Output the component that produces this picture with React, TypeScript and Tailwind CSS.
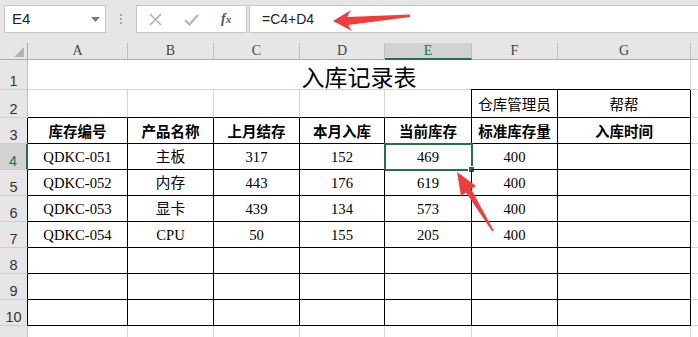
import React from 'react';

const colW = ['w-[100px]', 'w-[86px]', 'w-[86px]', 'w-[85px]', 'w-[87px]', 'w-[86px]', 'w-[133px]'];
const letters = ['A', 'B', 'C', 'D', 'E', 'F', 'G'];

const headers = ['库存编号', '产品名称', '上月结存', '本月入库', '当前库存', '标准库存量', '入库时间'];
const data = [
  ['QDKC-051', '主板', '317', '152', '469', '400', ''],
  ['QDKC-052', '内存', '443', '176', '619', '400', ''],
  ['QDKC-053', '显卡', '439', '134', '573', '400', ''],
  ['QDKC-054', 'CPU', '50', '155', '205', '400', ''],
  ['', '', '', '', '', '', ''],
  ['', '', '', '', '', '', ''],
  ['', '', '', '', '', '', ''],
];

const cellFont = "font-['Liberation_Serif','Noto_Sans_CJK_SC',serif]";

const RowHead: React.FC<{ n: number; h: string; active?: boolean; dark?: boolean }> = ({ n, h, active, dark }) => (
  <div
    className={`w-[28px] shrink-0 ${h} border-b border-[#cfcfcf] flex items-end justify-center pb-[1px] text-[14.5px] leading-none font-['Liberation_Sans',sans-serif] ${
      active
        ? 'bg-[#d2d2d2] text-[#217346] border-r-2 border-r-[#217346]'
        : dark
        ? 'bg-[#e6e6e6] text-[#333] border-r border-r-black'
        : 'bg-[#e6e6e6] text-[#333] border-r border-r-[#bdbdbd]'
    }`}
  >
    {n}
  </div>
);

export default function App() {
  return (
    <div className="relative w-[698px] h-[337px] overflow-hidden bg-white font-['Noto_Sans_CJK_SC',sans-serif]">
      {/* Formula bar */}
      <div className="h-[43px] bg-[#e6e6e6] flex items-start pt-[5px] pl-[4px]">
        <div className="w-[102px] h-[28px] shrink-0 bg-white border border-[#c6c6c6] flex items-center justify-between pl-[7px] pr-[5px]">
          <span className="text-[15px] text-[#222] font-['Liberation_Sans',sans-serif]">E4</span>
          <svg width="9" height="5" viewBox="0 0 9 5">
            <path d="M0 0 H9 L4.5 5 Z" fill="#7a7a7a" />
          </svg>
        </div>
        <div className="w-[30px] h-[28px] shrink-0 flex flex-col items-center justify-center gap-[2px]">
          <span className="w-[2px] h-[2px] bg-[#a6a6a6]" />
          <span className="w-[2px] h-[2px] bg-[#a6a6a6]" />
          <span className="w-[2px] h-[2px] bg-[#a6a6a6]" />
        </div>
        <div className="w-[111px] h-[28px] shrink-0 bg-white border border-[#c6c6c6] flex items-center pl-[12px]">
          <svg width="13" height="13" viewBox="0 0 13 13">
            <path d="M1 1 L12 12 M12 1 L1 12" stroke="#b3b3b3" strokeWidth="1.6" />
          </svg>
          <svg width="15" height="13" viewBox="0 0 15 13" className="ml-[22px]">
            <path d="M1 7 L5.5 11.5 L14 2" stroke="#b3b3b3" strokeWidth="2" fill="none" />
          </svg>
          <span className="ml-[22px] text-[14px] italic font-bold text-[#555] font-['Liberation_Serif',serif] leading-none">
            f<span className="text-[11px]">x</span>
          </span>
        </div>
        <div className="flex-1 h-[28px] ml-[2px] bg-white border border-[#c6c6c6] border-r-0 flex items-center pl-[12px] text-[14px] text-[#222] font-['Liberation_Sans',sans-serif]">
          =C4+D4
        </div>
      </div>

      {/* Column headers */}
      <div className="flex h-[17px]">
        <div className="w-[28px] shrink-0 bg-[#e6e6e6] border-r border-b border-[#ababab] flex items-end justify-end pr-[3px] pb-[2px]">
          <svg width="10" height="10" viewBox="0 0 10 10">
            <path d="M10 0 V10 H0 Z" fill="#b5b5b5" />
          </svg>
        </div>
        {letters.map((l, i) =>
          l === 'E' ? (
            <div
              key={l}
              className={`${colW[i]} shrink-0 bg-[#d2d2d2] border-r border-[#bfbfbf] border-b-2 border-b-[#217346] flex items-center justify-center text-[14px] leading-none text-[#217346] font-['Liberation_Serif',serif]`}
            >
              {l}
            </div>
          ) : (
            <div
              key={l}
              className={`${colW[i]} shrink-0 bg-[#e6e6e6] border-r border-[#bfbfbf] border-b border-b-[#ababab] flex items-center justify-center text-[14px] leading-none text-[#444] font-['Liberation_Serif',serif]`}
            >
              {l}
            </div>
          )
        )}
        <div className="flex-1 bg-[#e6e6e6] border-b border-[#ababab]" />
      </div>

      {/* Row 1 - title */}
      <div className="flex h-[30px]">
        <RowHead n={1} h="h-[30px]" />
        <div className="w-[663px] shrink-0 border-r border-[#d4d4d4] flex flex-col">
          <div className="flex-1 flex items-end justify-center text-[23px] leading-none text-black pb-[1px]">入库记录表</div>
          <div className="flex h-px">
            <div className="w-[443px] bg-[#d4d4d4]" />
            <div className="flex-1 bg-black" />
          </div>
        </div>
        <div className="flex-1 border-b border-[#d4d4d4]" />
      </div>

      {/* Row 2 */}
      <div className="flex h-[28px]">
        <RowHead n={2} h="h-[28px]" />
        {colW.map((w, i) => (
          <div
            key={i}
            className={`${w} shrink-0 border-b border-b-black border-r ${i >= 4 ? 'border-r-black' : 'border-r-[#d4d4d4]'} flex items-center justify-center text-[14.5px] text-black`}
          >
            {i === 5 ? '仓库管理员' : i === 6 ? '帮帮' : ''}
          </div>
        ))}
        <div className="flex-1 border-b border-[#d4d4d4]" />
      </div>

      {/* Row 3 - headers */}
      <div className="flex h-[26px]">
        <RowHead n={3} h="h-[26px]" dark />
        {colW.map((w, i) => (
          <div
            key={i}
            className={`${w} shrink-0 border-b border-r border-black flex items-center justify-center text-[14.5px] font-bold text-black`}
          >
            {headers[i]}
          </div>
        ))}
        <div className="flex-1 border-b border-[#d4d4d4]" />
      </div>

      {/* Rows 4-10 */}
      {data.map((row, r) => (
        <div key={r} className="flex h-[26px]">
          <RowHead n={r + 4} h="h-[26px]" dark active={r === 0} />
          {colW.map((w, i) => (
            <div
              key={i}
              className={`${w} shrink-0 relative border-b border-r border-black flex items-center justify-center text-[14.67px] text-black ${cellFont}`}
            >
              {row[i]}
              {r === 0 && i === 4 && (
                <div className="absolute left-[-1px] top-[-1px] w-[89px] h-[28px] border-2 border-[#217346]">
                  <div className="absolute right-[-4px] bottom-[-4px] w-[7px] h-[7px] bg-[#217346] border border-white" />
                </div>
              )}
            </div>
          ))}
          <div className="flex-1 border-b border-[#d4d4d4]" />
        </div>
      ))}

      {/* Row 11 */}
      <div className="flex h-[26px]">
        <RowHead n={11} h="h-[26px]" />
        {colW.map((w, i) => (
          <div key={i} className={`${w} shrink-0 border-b border-r border-[#d4d4d4]`} />
        ))}
        <div className="flex-1" />
      </div>

      {/* Annotation arrows */}
      <svg className="absolute left-0 top-0 pointer-events-none" width="698" height="337" viewBox="0 0 698 337">
        <polygon points="333,21 351,10 347,17 410,14.5 410,17 348,25 352,31" fill="#f23c3c" />
        <polygon points="457,172 476,186 471,189 494,231 492,231 466,192.5 461,196" fill="#f23c3c" />
      </svg>
    </div>
  );
}
